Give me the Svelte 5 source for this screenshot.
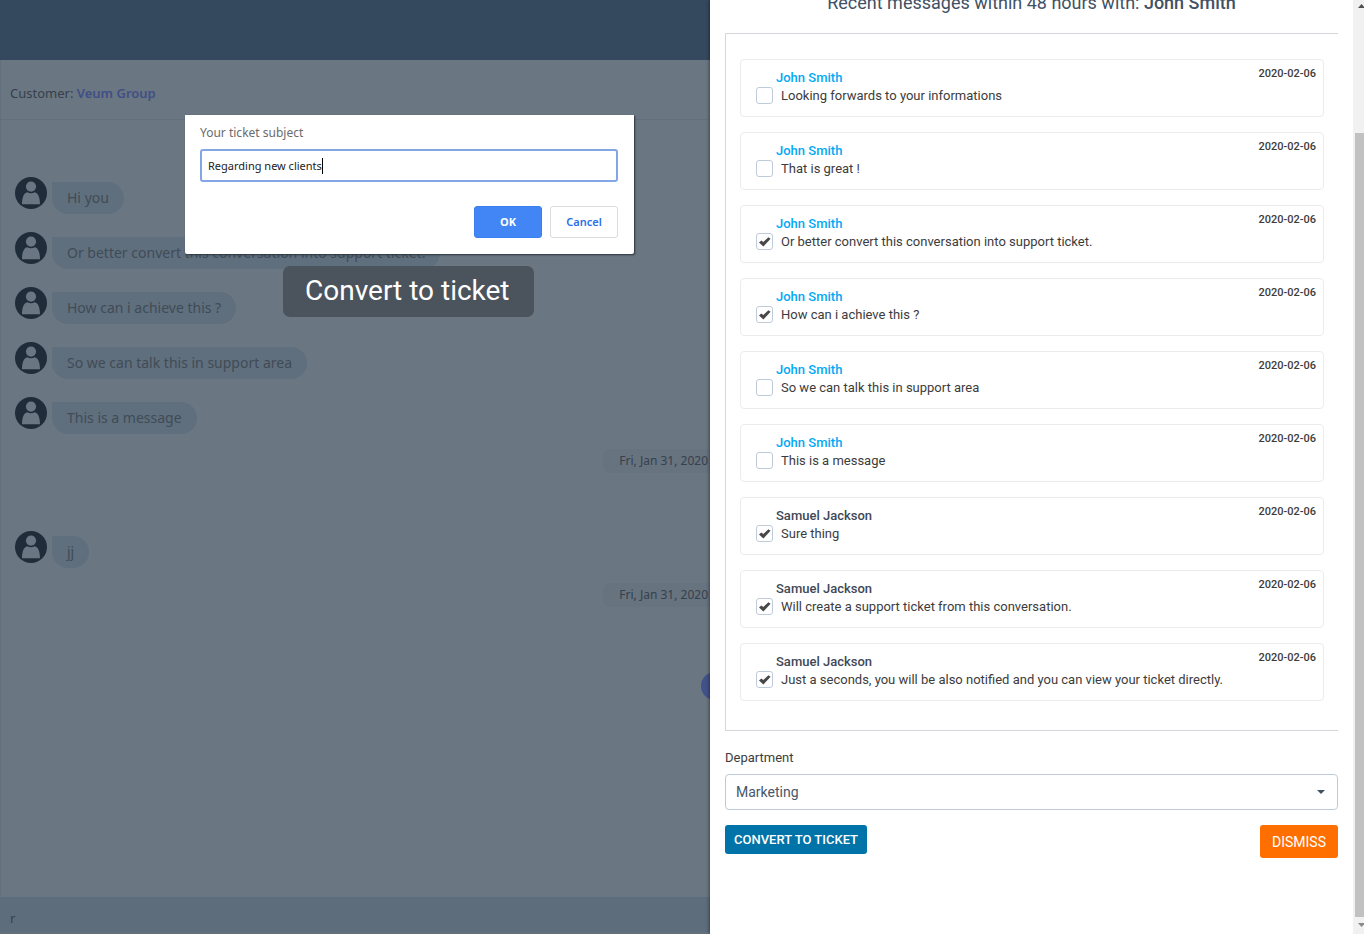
<script>
  let subject = 'Regarding new clients';
  let reply = 'r';
  let department = 'Marketing';

  const departments = ['Marketing', 'Sales', 'Abuse', 'Logistics'];

  const chat = [
    { type: 'message', text: 'Hi you' },
    { type: 'message', text: 'Or better convert this conversation into support ticket.' },
    { type: 'message', text: 'How can i achieve this ?' },
    { type: 'message', text: 'So we can talk this in support area' },
    { type: 'message', text: 'This is a message' },
    { type: 'date', text: 'Fri, Jan 31, 2020' },
    { type: 'message', text: 'jj' },
    { type: 'date', text: 'Fri, Jan 31, 2020' },
    { type: 'sent' }
  ];

  let recent = [
    { from: 'John Smith', client: true, text: 'Looking forwards to your informations', checked: false },
    { from: 'John Smith', client: true, text: 'That is great !', checked: false },
    { from: 'John Smith', client: true, text: 'Or better convert this conversation into support ticket.', checked: true },
    { from: 'John Smith', client: true, text: 'How can i achieve this ?', checked: true },
    { from: 'John Smith', client: true, text: 'So we can talk this in support area', checked: false },
    { from: 'John Smith', client: true, text: 'This is a message', checked: false },
    { from: 'Samuel Jackson', client: false, text: 'Sure thing', checked: true },
    { from: 'Samuel Jackson', client: false, text: 'Will create a support ticket from this conversation.', checked: true },
    { from: 'Samuel Jackson', client: false, text: 'Just a seconds, you will be also notified and you can view your ticket directly.', checked: true }
  ];
  const sentOn = '2020-02-06';
</script>

<div class="screen">
  <main class="chat">
    <header class="topbar"></header>
    <div class="customer">Customer: <a href="#customer">Veum Group</a></div>

    <div class="conversation">
      {#each chat as item}
        {#if item.type == 'message'}
          <div class="row">
            <svg class="avatar" viewBox="0 0 32 32" aria-hidden="true">
              <circle cx="16" cy="16" r="16" fill="#1f2d3a" />
              <circle cx="16" cy="9.600" r="5.100" fill="#6a7681" />
              <path d="M7 27.300C7 20.500 8.800 15.700 12.300 15.200C14.400 16.500 17.600 16.500 19.700 15.200C23.200 15.700 25 20.500 25 27.300Z" fill="#6a7681" />
            </svg>
            <p class="bubble">{item.text}</p>
          </div>
        {:else if item.type == 'date'}
          <div class="day">{item.text}</div>
        {:else}
          <div class="sent"></div>
        {/if}
      {/each}
    </div>

    <input class="reply" type="text" aria-label="Message" bind:value={reply} />

    <form class="dialog" on:submit|preventDefault>
      <label for="subject">Your ticket subject</label>
      <div class="field">
        <input id="subject" type="text" autocomplete="off" bind:value={subject} />
        <span class="caret"></span>
      </div>
      <div class="dialog-actions">
        <button type="submit" class="ok">OK</button>
        <button type="button" class="cancel">Cancel</button>
      </div>
    </form>
    <div class="hint">Convert to ticket</div>
  </main>

  <aside class="panel">
    <div class="panel-body">
      <h4>Recent messages within 48 hours with: <b>John Smith</b></h4>

      <div class="messages">
        {#each recent as message, i}
          <div class="card">
            <div class="content">
              <span class="from" class:client={message.client}>{message.from}</span>
              <div class="check">
                <span class="box">
                  <input type="checkbox" id="message-{i}" bind:checked={message.checked} />
                  {#if message.checked}
                    <svg viewBox="0 0 17 17" aria-hidden="true">
                      <path d="M3 9.600L5.300 7.500L7.300 9L12.400 4.200L14.600 5.700L7.400 13.600Z" fill="#484848" />
                    </svg>
                  {/if}
                </span>
                <label for="message-{i}">{message.text}</label>
              </div>
            </div>
            <time>{sentOn}</time>
          </div>
        {/each}
      </div>

      <label class="department-label" for="department">Department</label>
      <div class="select">
        <select id="department" bind:value={department}>
          {#each departments as name}
            <option>{name}</option>
          {/each}
        </select>
        <svg viewBox="0 0 8 4" aria-hidden="true"><path d="M0 0H8L4 4Z" fill="#415165" /></svg>
      </div>

      <div class="actions">
        <button type="button" class="convert">CONVERT TO TICKET</button>
        <button type="button" class="dismiss">DISMISS</button>
      </div>
    </div>

    <div class="scrollbar" aria-hidden="true">
      <svg viewBox="0 0 17 17"><path d="M5 8L8.500 4L12 8Z" fill="#505050" /></svg>
      <div class="track"><div class="thumb"></div></div>
      <svg viewBox="0 0 17 17"><path d="M5 6L8.500 10L12 6Z" fill="#8a8a8a" /></svg>
    </div>
  </aside>
</div>

<style>
  :global(body) {
    background: #6a7681;
  }
  .screen {
    display: grid;
    grid-template-columns: 355fr 327fr;
    min-height: 100vh;
    font-family: Roboto, "Liberation Sans", sans-serif;
    font-size: 13px;
  }
  .screen * {
    box-sizing: border-box;
  }
  button, input, select {
    font: inherit;
    margin: 0;
  }

  .chat {
    position: relative;
    display: flex;
    flex-direction: column;
    min-width: 0;
    overflow: hidden;
    background: #6a7681;
    color: #35414d;
    font-family: "Noto Sans", "Open Sans", sans-serif;
  }
  .topbar {
    height: 60px;
    background: #35495e;
  }
  .customer {
    height: 60px;
    padding: 23px 9px 0;
    border-left: 1px solid #63707c;
    border-bottom: 1px solid #63707c;
    line-height: 20px;
  }
  .customer a {
    color: #414f86;
    font-weight: 600;
    text-decoration: none;
  }
  .conversation {
    flex: 1;
    display: flex;
    flex-direction: column;
    padding: 57px 0 0 14px;
    border-left: 1px solid #63707c;
  }
  .row {
    display: flex;
    gap: 5px;
    margin-bottom: 18px;
  }
  .avatar {
    width: 32px;
    height: 32px;
  }
  .bubble {
    margin: 5px 0 0;
    padding: 0 15px;
    border-radius: 0 16px 16px 16px;
    background: #5f6f7e;
    color: #414b55;
    font-size: 14px;
    line-height: 32px;
    white-space: nowrap;
  }
  .day {
    align-self: flex-end;
    margin: -3px 0 58px;
    padding: 0 2px 0 16px;
    border-radius: 8px 0 0 8px;
    background: #67737f;
    font-size: 12px;
    line-height: 24px;
  }
  .sent {
    align-self: flex-end;
    width: 28px;
    height: 28px;
    margin: 7px -19px 0 0;
    border-radius: 50%;
    background: #41528a;
  }
  .reply {
    width: 100%;
    height: 37px;
    padding: 6px 10px 0;
    border: 0;
    border-bottom: 2px solid #63707c;
    border-radius: 0;
    outline: 0;
    background: #5d6d7c;
    color: #35414d;
  }

  .dialog {
    position: absolute;
    top: 115px;
    left: 185px;
    width: 449px;
    padding: 9px 16px 16px 15px;
    border-radius: 0 0 2px 2px;
    background: #fff;
    box-shadow: 1px 1px 2px #2b333b;
    color: #6b6b6b;
  }
  .dialog label {
    display: block;
    font-size: 12px;
    line-height: 18px;
  }
  .field {
    display: flex;
    align-items: center;
    height: 33px;
    margin-top: 7px;
    padding: 0 6px;
    border: 2px solid #83a6e4;
    border-radius: 3px;
  }
  .field input {
    field-sizing: content;
    padding: 0;
    border: 0;
    outline: 0;
    background: none;
    color: #222;
    font-size: 11px;
  }
  .caret {
    width: 1px;
    height: 16px;
    background: #000;
  }
  .dialog-actions {
    display: flex;
    justify-content: flex-end;
    gap: 8px;
    margin-top: 24px;
  }
  .dialog-actions button {
    width: 68px;
    height: 32px;
    padding: 0 0 2px;
    border: 1px solid #dadce0;
    border-radius: 3px;
    background: #fff;
    color: #2a6fe8;
    font-size: 11px;
    font-weight: 600;
  }
  .dialog-actions .ok {
    border-color: #3b7ff2;
    background: #4285f4;
    color: #fff;
    font-weight: 700;
  }
  .hint {
    position: absolute;
    top: 266px;
    left: 283px;
    padding: 0 24px 2px 22px;
    border-radius: 7px;
    background: #4b535c;
    color: #fff;
    font-family: Roboto, sans-serif;
    font-size: 28px;
    line-height: 49px;
    white-space: nowrap;
  }

  .panel {
    position: relative;
    display: flex;
    min-width: 0;
    overflow: hidden;
    background: #fff;
    box-shadow: -1px 0 3px rgba(0, 0, 0, 0.4);
    color: #3c3c3c;
  }
  .panel-body {
    flex: 1;
    min-width: 0;
    padding: 0 15px;
  }
  h4 {
    margin: -9px 0 18px;
    color: #415165;
    font-size: 18px;
    font-weight: 400;
    line-height: 24px;
    text-align: center;
  }
  h4 b {
    font-weight: 500;
  }
  .messages {
    display: flex;
    flex-direction: column;
    gap: 15px;
    padding: 25px 14px 29px;
    border: 1px solid #d3d6da;
    border-right: 0;
  }
  .card {
    display: flex;
    justify-content: space-between;
    height: 58px;
    padding: 9px 7px 0 15px;
    border: 1px solid #ececee;
    border-radius: 4px;
    line-height: 18px;
  }
  .from {
    display: block;
    margin-left: 20px;
    color: #3f4856;
    font-weight: 500;
  }
  .from.client {
    color: #03a9f4;
  }
  .check {
    display: flex;
    align-items: flex-start;
    gap: 8px;
  }
  .box {
    position: relative;
    width: 17px;
    height: 17px;
  }
  .box input {
    appearance: none;
    display: block;
    width: 17px;
    height: 17px;
    border: 1px solid #bfcbd9;
    border-radius: 3px;
    background: #fff;
  }
  .box svg {
    position: absolute;
    inset: 0;
    pointer-events: none;
  }
  time {
    font-size: 11px;
    font-weight: 500;
    line-height: 10px;
  }
  .department-label {
    display: block;
    margin: 18px 0 7px;
    line-height: 18px;
  }
  .select {
    position: relative;
  }
  .select select {
    appearance: none;
    display: block;
    width: 100%;
    height: 36px;
    padding: 0 10px;
    border: 1px solid #bfcbd9;
    border-radius: 4px;
    background: #fff;
    color: #48576a;
    font-size: 14px;
  }
  .select svg {
    position: absolute;
    top: 16px;
    right: 13px;
    width: 8px;
    height: 4px;
    pointer-events: none;
  }
  .actions {
    display: flex;
    justify-content: space-between;
    align-items: flex-start;
    margin-top: 15px;
  }
  .actions button {
    border: 0;
    border-radius: 3px;
    color: #fff;
    font-weight: 500;
  }
  .actions .convert {
    height: 29px;
    padding: 0 9px;
    background: #0074a9;
  }
  .actions .dismiss {
    height: 33px;
    padding: 0 12px;
    background: #ff6f00;
    font-size: 14px;
    font-weight: 400;
  }

  .scrollbar {
    display: flex;
    flex-direction: column;
    width: 11px;
    overflow: hidden;
    background: #f1f1f1;
  }
  .scrollbar svg {
    width: 17px;
    height: 17px;
  }
  .track {
    flex: 1;
    display: flex;
    flex-direction: column;
    padding: 116px 0 0 2px;
  }
  .thumb {
    flex: 1;
    background: #c1c1c1;
  }
</style>
